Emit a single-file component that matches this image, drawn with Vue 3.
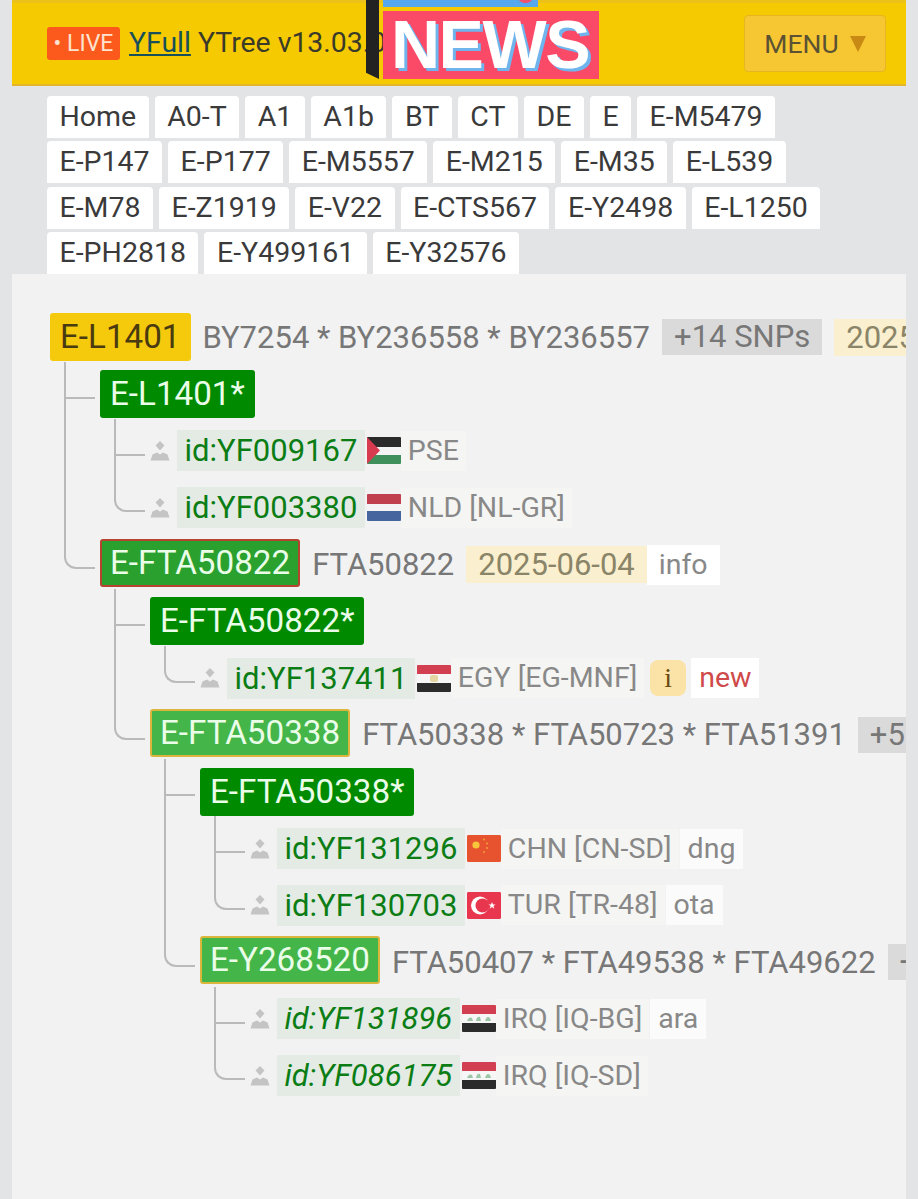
<template>
  <div class="page">
    <header class="topbar">
      <span class="live">• LIVE</span>
      <span class="title"><a class="yfull">YFull</a> YTree v13.03.00</span>
      <div class="news">
        <i class="news-bar"></i>
        <i class="news-strip"></i>
        <span class="news-word">NEWS</span>
      </div>
      <button class="menu">MENU <i class="caret"></i></button>
    </header>

    <nav class="crumbs">
      <a v-for="c in crumbs" :key="c" class="crumb">{{ c }}</a>
    </nav>

    <main class="content">
      <div v-for="row in rows" :key="row.name || row.id" class="row" :style="{ paddingLeft: row.depth * 50 + 'px' }">
        <i v-for="g in row.guides" :key="g" class="guide" :style="{ left: lineLeft(g) }"></i>
        <i v-if="row.depth" class="elbow" :class="{ last: row.last }" :style="{ left: lineLeft(row.depth) }"></i>

        <template v-if="row.id">
          <svg class="person" viewBox="0 0 20 20" width="20" height="20">
            <path d="M10 0 L14.5 4.5 L10 9.5 L5.500 4.500 Z" fill="#c4c4c4" />
            <path d="M0.500 19.500 L2.500 13.500 L7 11.500 L10 13.500 L13 11.500 L17.500 13.500 L19.500 19.500 Z" fill="#c4c4c4" />
          </svg>
          <span class="sample" :class="{ italic: row.italic }">{{ row.id }}</span>
          <svg class="flag" viewBox="0 0 34 27" width="34" height="27">
            <template v-if="row.flag === 'pse'">
              <rect width="34" height="10" fill="#2b2b2b" />
              <rect y="10" width="34" height="8" fill="#f4f4f4" />
              <rect y="18" width="34" height="9" fill="#3f8f5c" />
              <path d="M0 0 L13 13.500 L0 27 Z" fill="#d83a50" />
            </template>
            <template v-else-if="row.flag === 'nld'">
              <rect width="34" height="10" fill="#c0404f" />
              <rect y="10" width="34" height="7" fill="#f4f4f4" />
              <rect y="17" width="34" height="10" fill="#46659f" />
            </template>
            <template v-else-if="row.flag === 'egy'">
              <rect width="34" height="9" fill="#d23f50" />
              <rect y="9" width="34" height="9" fill="#f6f6f6" />
              <rect y="18" width="34" height="9" fill="#2b2b2b" />
              <rect x="13" y="10" width="8" height="7" rx="2" fill="#e4d5a2" />
            </template>
            <template v-else-if="row.flag === 'chn'">
              <rect width="34" height="27" rx="1" fill="#e8532f" />
              <circle cx="9" cy="10" r="3.600" fill="#f7c53a" />
              <circle cx="17" cy="4.500" r="1.100" fill="#f09a38" />
              <circle cx="20" cy="8.500" r="1.100" fill="#f09a38" />
              <circle cx="20" cy="13" r="1.100" fill="#f09a38" />
              <circle cx="17" cy="17" r="1.100" fill="#f09a38" />
            </template>
            <template v-else-if="row.flag === 'tur'">
              <rect width="34" height="27" rx="1" fill="#e8364e" />
              <circle cx="13" cy="13.500" r="9" fill="#fff" />
              <circle cx="15.500" cy="13.500" r="7" fill="#e8364e" />
              <path d="M25 10 L26 12.500 L28.600 12.500 L26.500 14.100 L27.300 16.700 L25 15.100 L22.800 16.700 L23.600 14.100 L21.400 12.500 L24 12.500 Z" fill="#fff" />
            </template>
            <template v-else>
              <rect width="34" height="9" fill="#d23f50" />
              <rect y="9" width="34" height="9" fill="#f6f6f6" />
              <rect y="18" width="34" height="9" fill="#2b2b2b" />
              <path d="M5 16 q2 -5 5 -3 l1 3 Z M14 16 q1 -5 4 -4 l1 4 Z M23 16 q2 -6 5 -3 l1 3 Z" fill="#9cc7a6" />
            </template>
          </svg>
          <span class="geo">{{ row.geo }}</span>
          <span v-if="row.lang" class="lang">{{ row.lang }}</span>
          <span v-if="row.note" class="note">i</span>
          <span v-if="row.isNew" class="new">new</span>
        </template>

        <template v-else>
          <span class="node" :class="row.kind">{{ row.name }}</span>
          <span v-if="row.snps" class="snps">{{ row.snps }}</span>
          <span v-if="row.more" class="more">{{ row.more }}</span>
          <span v-if="row.date" class="date">{{ row.date }}</span>
          <span v-if="row.info" class="info">{{ row.info }}</span>
        </template>
      </div>
    </main>
  </div>
</template>

<script setup>
const crumbs = [
  'Home', 'A0-T', 'A1', 'A1b', 'BT', 'CT', 'DE', 'E', 'E-M5479',
  'E-P147', 'E-P177', 'E-M5557', 'E-M215', 'E-M35', 'E-L539',
  'E-M78', 'E-Z1919', 'E-V22', 'E-CTS567', 'E-Y2498', 'E-L1250',
  'E-PH2818', 'E-Y499161', 'E-Y32576',
];

const tree = [
  {
    name: 'E-L1401', kind: 'current', snps: 'BY7254 * BY236558 * BY236557', more: '+14 SNPs', date: '2025-06-04',
    children: [
      {
        name: 'E-L1401*', kind: 'dark',
        children: [
          { id: 'id:YF009167', flag: 'pse', geo: 'PSE' },
          { id: 'id:YF003380', flag: 'nld', geo: 'NLD [NL-GR]' },
        ],
      },
      {
        name: 'E-FTA50822', kind: 'red', snps: 'FTA50822', date: '2025-06-04', info: 'info',
        children: [
          {
            name: 'E-FTA50822*', kind: 'dark',
            children: [
              { id: 'id:YF137411', flag: 'egy', geo: 'EGY [EG-MNF]', note: true, isNew: true },
            ],
          },
          {
            name: 'E-FTA50338', kind: 'gold', snps: 'FTA50338 * FTA50723 * FTA51391', more: '+5 SNPs',
            children: [
              {
                name: 'E-FTA50338*', kind: 'dark',
                children: [
                  { id: 'id:YF131296', flag: 'chn', geo: 'CHN [CN-SD]', lang: 'dng' },
                  { id: 'id:YF130703', flag: 'tur', geo: 'TUR [TR-48]', lang: 'ota' },
                ],
              },
              {
                name: 'E-Y268520', kind: 'gold', snps: 'FTA50407 * FTA49538 * FTA49622', more: '+3 SNPs',
                children: [
                  { id: 'id:YF131896', flag: 'irq', geo: 'IRQ [IQ-BG]', lang: 'ara', italic: true },
                  { id: 'id:YF086175', flag: 'irq', geo: 'IRQ [IQ-SD]', italic: true },
                ],
              },
            ],
          },
        ],
      },
    ],
  },
];

// one row per node, guides are the parent lines that run through the row
function flatten(nodes, depth, guides) {
  return nodes.flatMap((n, i) => {
    const last = i === nodes.length - 1;
    const rowGuides = depth > 0 && !last ? [...guides, depth] : guides;
    return [
      { ...n, depth, last, guides: rowGuides },
      ...flatten(n.children || [], depth + 1, rowGuides),
    ];
  });
}

const rows = flatten(tree, 0, []);

const lineLeft = (depth) => (depth - 1) * 50 + 14 + 'px';
</script>

<style>
html, body {
  margin: 0;
  background: #e2e4e6;
}
</style>

<style scoped>
.page {
  width: 918px;
  height: 1199px;
  overflow: hidden;
  box-sizing: border-box;
  padding: 0 12px;
  font-family: Roboto, "Liberation Sans", sans-serif;
}

.topbar {
  position: relative;
  display: flex;
  align-items: center;
  box-sizing: border-box;
  height: 86px;
  padding: 0 20px 0 35px;
  background: #f5ca00;
  border-top: 3px solid #ecc21a;
  border-bottom: 2px solid #e3b52a;
  white-space: nowrap;
  font-size: 28.4px;
  color: #3a3a2a;
}

.live {
  flex: none;
  width: 73px;
  height: 33px;
  border-radius: 3px;
  background: #fb5a1c;
  color: #fde3d0;
  font-size: 23px;
  line-height: 33px;
  text-align: center;
}

.title {
  flex: 1;
  min-width: 0;
  margin-left: 9px;
  margin-top: -2px;
  overflow: hidden;
}

.yfull {
  color: #17505a;
  text-decoration: underline;
}

.news {
  position: absolute;
  left: 354px;
  top: -3px;
  width: 240px;
  height: 80px;
}

.news-bar {
  position: absolute;
  left: 0;
  top: 0;
  width: 13px;
  height: 79px;
  background: #222;
  clip-path: polygon(0 0, 100% 0, 100% 100%, 0 92%);
}

.news-strip {
  position: absolute;
  left: 17px;
  top: 0;
  width: 155px;
  height: 7px;
  overflow: hidden;
  background: #56a8ee;
}

.news-strip::after {
  content: "";
  position: absolute;
  left: 136px;
  top: -5px;
  width: 13px;
  height: 8px;
  border-radius: 50%;
  background: #f0506e;
}

.news-word {
  position: absolute;
  left: 17px;
  top: 11px;
  box-sizing: border-box;
  width: 216px;
  height: 68px;
  padding-left: 8px;
  background: #fb4a68;
  color: #fff;
  font-family: "Liberation Sans", Arial, sans-serif;
  font-weight: 700;
  font-size: 68px;
  letter-spacing: -1.5px;
  line-height: 66px;
  text-shadow: 3px 3px 0 #6fb4ec;
}

.menu {
  flex: none;
  box-sizing: border-box;
  display: flex;
  align-items: center;
  justify-content: center;
  gap: 11px;
  width: 142px;
  height: 57px;
  border: 1px solid #e6b520;
  border-radius: 4px;
  background: #f6c733;
  color: #5a5232;
  font: 400 26.5px Roboto, sans-serif;
}

.caret {
  width: 0;
  height: 0;
  border-left: 8.5px solid transparent;
  border-right: 8.5px solid transparent;
  border-top: 16px solid #c88a14;
}

.crumbs {
  display: flex;
  flex-wrap: wrap;
  align-items: flex-start;
  gap: 3px 6px;
  height: 188px;
  box-sizing: border-box;
  padding: 10px 30px 0 35px;
  overflow: hidden;
}

.crumb {
  height: 42px;
  padding: 0 12.5px;
  border-radius: 4px 4px 0 0;
  background: #fff;
  color: #3a3a3a;
  font-size: 28.5px;
  line-height: 42px;
}

.content {
  height: 926px;
  background: #f2f2f2;
  padding: 35px 0 0 38px;
  overflow: hidden;
}

.row {
  position: relative;
  display: flex;
  align-items: center;
  height: 56.8px;
  white-space: nowrap;
  font-size: 31px;
}

.guide {
  position: absolute;
  top: 0;
  bottom: 0;
  width: 2px;
  background: #bababa;
}

.elbow {
  position: absolute;
  top: -4px;
  width: 31px;
  height: 37px;
  box-sizing: border-box;
  border-left: 2px solid #bababa;
  border-bottom: 2px solid #bababa;
}

.elbow.last {
  border-bottom-left-radius: 12px;
}

.node {
  flex: none;
  box-sizing: border-box;
  height: 48px;
  padding: 0 10px;
  border-radius: 3px;
  font-size: 33.2px;
  line-height: 48px;
  color: #eafde8;
}

.node.current {
  background: #f5ca0c;
  color: #4a3a10;
}

.node.dark {
  background: #008a00;
}

.node.red {
  margin-bottom: 4px;
  padding: 0 8px;
  background: #2aa02e;
  border: 2px solid #b5432e;
  line-height: 44px;
}

.node.gold {
  margin-bottom: 4px;
  padding: 0 8px;
  background: #44b549;
  border: 2px solid #dcb53c;
  line-height: 44px;
}

.snps {
  margin-left: 12px;
  color: #777;
}

.more {
  margin-left: 12px;
  padding: 0 12px;
  background: #dadada;
  color: #777;
  line-height: 36px;
}

.date {
  margin-left: 12px;
  padding: 0 12px;
  background: #faf0cf;
  color: #8a8468;
  line-height: 37px;
}

.info {
  padding: 0 12px;
  background: #fff;
  color: #888;
  font-size: 28.5px;
  line-height: 40px;
}

.person {
  flex: none;
  margin-right: 7px;
}

.sample {
  padding: 0 7.500px;
  height: 41px;
  line-height: 41px;
  background: #e3ebe4;
  color: #0b7d14;
}

.sample.italic {
  font-style: italic;
}

.flag {
  flex: none;
  margin-left: 2px;
  border-radius: 1px;
}

.geo {
  padding: 0 7px;
  font-size: 28.5px;
  line-height: 40px;
  color: #888;
  background: #f5f5f3;
}

.lang {
  margin-left: 1px;
  padding: 0 8px;
  line-height: 40px;
  font-size: 28.5px;
  color: #888;
  background: #fbfbfb;
}

.note {
  margin-left: 6px;
  width: 36px;
  height: 36px;
  border-radius: 8px;
  background: #fbe3a8;
  color: #6a4a10;
  font-family: "Liberation Serif", serif;
  font-size: 28px;
  line-height: 36px;
  text-align: center;
}

.new {
  margin-left: 5px;
  padding: 0 8px;
  line-height: 40px;
  font-size: 28.5px;
  color: #cf4a4a;
  background: #fff;
}
</style>
